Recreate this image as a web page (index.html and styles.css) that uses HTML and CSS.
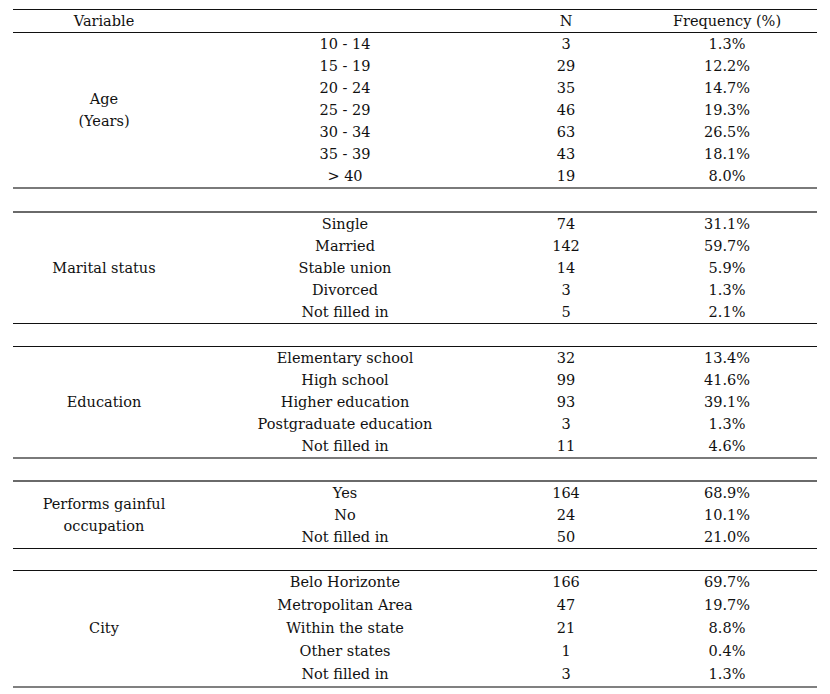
FILE: index.html
```html
<!DOCTYPE html>
<html>
<head>
<meta charset="utf-8">
<link rel="stylesheet" href="styles.css">
</head>
<body>
<table class="tbl">
  <colgroup>
    <col class="c1"><col class="c2"><col class="c3"><col class="c4">
  </colgroup>
  <thead>
    <tr class="head"><th>Variable</th><th></th><th>N</th><th>Frequency (%)</th></tr>
  </thead>
  <tbody>
    <tr><td rowspan="7" class="var">Age<br>(Years)</td><td>10 - 14</td><td>3</td><td>1.3%</td></tr>
    <tr><td>15 - 19</td><td>29</td><td>12.2%</td></tr>
    <tr><td>20 - 24</td><td>35</td><td>14.7%</td></tr>
    <tr><td>25 - 29</td><td>46</td><td>19.3%</td></tr>
    <tr><td>30 - 34</td><td>63</td><td>26.5%</td></tr>
    <tr><td>35 - 39</td><td>43</td><td>18.1%</td></tr>
    <tr><td>&gt; 40</td><td>19</td><td>8.0%</td></tr>
    <tr class="gap gray first"><td colspan="4"></td></tr>

    <tr><td rowspan="5" class="var">Marital status</td><td>Single</td><td>74</td><td>31.1%</td></tr>
    <tr><td>Married</td><td>142</td><td>59.7%</td></tr>
    <tr><td>Stable union</td><td>14</td><td>5.9%</td></tr>
    <tr><td>Divorced</td><td>3</td><td>1.3%</td></tr>
    <tr><td>Not filled in</td><td>5</td><td>2.1%</td></tr>
    <tr class="gap tall"><td colspan="4"></td></tr>

    <tr><td rowspan="5" class="var">Education</td><td>Elementary school</td><td>32</td><td>13.4%</td></tr>
    <tr><td>High school</td><td>99</td><td>41.6%</td></tr>
    <tr><td>Higher education</td><td>93</td><td>39.1%</td></tr>
    <tr><td>Postgraduate education</td><td>3</td><td>1.3%</td></tr>
    <tr><td>Not filled in</td><td>11</td><td>4.6%</td></tr>
    <tr class="gap gray"><td colspan="4"></td></tr>

    <tr><td rowspan="3" class="var">Performs gainful<br>occupation</td><td>Yes</td><td>164</td><td>68.9%</td></tr>
    <tr><td>No</td><td>24</td><td>10.1%</td></tr>
    <tr><td>Not filled in</td><td>50</td><td>21.0%</td></tr>
    <tr class="gap"><td colspan="4"></td></tr>

    <tr class="city"><td rowspan="5" class="var">City</td><td>Belo Horizonte</td><td>166</td><td>69.7%</td></tr>
    <tr class="city"><td>Metropolitan Area</td><td>47</td><td>19.7%</td></tr>
    <tr class="city"><td>Within the state</td><td>21</td><td>8.8%</td></tr>
    <tr class="city"><td>Other states</td><td>1</td><td>0.4%</td></tr>
    <tr class="city last"><td>Not filled in</td><td>3</td><td>1.3%</td></tr>
  </tbody>
</table>
</body>
</html>
```
FILE: styles.css
```css
html, body {
  margin: 0;
  padding: 0;
  background: #fff;
}
body {
  padding: 9px 13px 0 13px;
  font-family: "DejaVu Serif", "Liberation Serif", serif;
  font-size: 14.5px;
  color: #111;
}
.tbl {
  width: 804px;
  border-collapse: collapse;
  table-layout: fixed;
}
.c1 { width: 182px; }
.c2 { width: 300px; }
.c3 { width: 142px; }
.c4 { width: 180px; }
.tbl th, .tbl td {
  padding: 0;
  height: 22px;
  text-align: center;
  vertical-align: middle;
  font-weight: normal;
  line-height: 22px;
  white-space: nowrap;
}
.head th {
  border-top: 1px solid #111;
  border-bottom: 1px solid #111;
}
.gap td {
  height: 21px;
  border-top: 1px solid #111;
  border-bottom: 1px solid #111;
}
.gap.tall td {
  height: 22px;
}
.gap.gray td {
  height: 21px;
  border-top: 2px solid #7a7a7a;
  border-bottom: 2px solid #6a6a6a;
}
.gap.gray.first td {
  height: 22px;
}
.city td { height: 23px; line-height: 23px; }
.city.last td { height: 22px; border-bottom: 2px solid #808080; }
.tbl tr.city td.var { border-bottom: 2px solid #808080; }
```
